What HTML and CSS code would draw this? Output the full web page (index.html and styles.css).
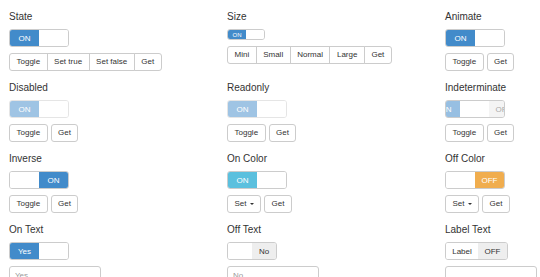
FILE: index.html
```html
<!DOCTYPE html>
<html lang="en">
<head>
  <meta charset="UTF-8">
  <title>Bootstrap Switch Options</title>
  <link rel="stylesheet" href="styles.css">
</head>
<body>
  <div class="grid">
    <div class="cell">
      <h4>State</h4>
      <div class="switch"><span class="on primary">ON</span><span class="label"></span></div>
      <div class="btn-group">
        <button class="btn">Toggle</button><button class="btn">Set true</button><button class="btn">Set false</button><button class="btn">Get</button>
      </div>
    </div>
    <div class="cell">
      <h4>Size</h4>
      <div class="switch mini"><span class="on primary">ON</span><span class="label"></span></div>
      <div class="btn-group">
        <button class="btn">Mini</button><button class="btn">Small</button><button class="btn">Normal</button><button class="btn">Large</button><button class="btn">Get</button>
      </div>
    </div>
    <div class="cell">
      <h4>Animate</h4>
      <div class="switch"><span class="on primary">ON</span><span class="label"></span></div>
      <div class="btns">
        <button class="btn">Toggle</button><button class="btn">Get</button>
      </div>
    </div>

    <div class="cell">
      <h4>Disabled</h4>
      <div class="switch faded"><span class="on primary">ON</span><span class="label"></span></div>
      <div class="btns">
        <button class="btn">Toggle</button><button class="btn">Get</button>
      </div>
    </div>
    <div class="cell">
      <h4>Readonly</h4>
      <div class="switch faded"><span class="on primary">ON</span><span class="label"></span></div>
      <div class="btns">
        <button class="btn">Toggle</button><button class="btn">Get</button>
      </div>
    </div>
    <div class="cell">
      <h4>Indeterminate</h4>
      <div class="switch fixed">
        <div class="track half"><span class="on primary faded-part">ON</span><span class="label"></span><span class="off">OFF</span></div>
      </div>
      <div class="btns">
        <button class="btn">Toggle</button><button class="btn">Get</button>
      </div>
    </div>

    <div class="cell">
      <h4>Inverse</h4>
      <div class="switch"><span class="label"></span><span class="on primary">ON</span></div>
      <div class="btns">
        <button class="btn">Toggle</button><button class="btn">Get</button>
      </div>
    </div>
    <div class="cell">
      <h4>On Color</h4>
      <div class="switch"><span class="on info">ON</span><span class="label"></span></div>
      <div class="btns">
        <button class="btn">Set <span class="caret"></span></button><button class="btn">Get</button>
      </div>
    </div>
    <div class="cell">
      <h4>Off Color</h4>
      <div class="switch"><span class="label"></span><span class="on warning">OFF</span></div>
      <div class="btns">
        <button class="btn">Set <span class="caret"></span></button><button class="btn">Get</button>
      </div>
    </div>

    <div class="cell">
      <h4>On Text</h4>
      <div class="switch"><span class="on primary">Yes</span><span class="label"></span></div>
      <input class="field" type="text" placeholder="Yes">
    </div>
    <div class="cell">
      <h4>Off Text</h4>
      <div class="switch narrow"><span class="label"></span><span class="off">No</span></div>
      <input class="field" type="text" placeholder="No">
    </div>
    <div class="cell">
      <h4>Label Text</h4>
      <div class="switch wide"><span class="label">Label</span><span class="off">OFF</span></div>
      <input class="field" type="text">
    </div>
  </div>
</body>
</html>
```

FILE: styles.css
```css
* {
  box-sizing: border-box;
}

body {
  margin: 0;
  padding: 11px 0 0 9px;
  background: #fff;
  color: #333;
  font-family: 'Liberation Sans', Arial, sans-serif;
  overflow: hidden;
}

.grid {
  display: grid;
  grid-template-columns: 218px 218px 1fr;
  row-gap: 11px;
}

.cell {
  display: flex;
  flex-direction: column;
  align-items: flex-start;
}

h4 {
  margin: 0 0 6px;
  font-size: 10px;
  line-height: 12px;
  font-weight: normal;
  color: #333;
}

.switch {
  display: flex;
  height: 18px;
  border: 1px solid #ccc;
  border-radius: 3px;
  overflow: hidden;
  font-size: 8px;
  background: #fff;
}

.switch span {
  width: 29px;
  flex: none;
  display: flex;
  align-items: center;
  justify-content: center;
}

.switch.fixed {
  width: 60px;
}

.track {
  display: flex;
  height: 100%;
  flex: none;
}

.track.half {
  margin-left: -15px;
}

.switch.mini {
  height: 11px;
  font-size: 6px;
}

.switch.mini span {
  width: 18px;
}

.switch.narrow span {
  width: 24px;
}

.switch.wide .label {
  width: 32px;
}

.switch.faded {
  opacity: 0.5;
}

.on {
  color: #fff;
}

.primary {
  background: #428bca;
}

.faded-part {
  opacity: 0.55;
}

.info {
  background: #5bc0de;
}

.warning {
  background: #f0ad4e;
}

.label {
  background: #fff;
  color: #333;
}

.off {
  background: #eee;
  color: #333;
}

.track .off {
  color: #aaa;
  background: #f4f4f4;
}

.btn-group,
.btns {
  display: flex;
  margin-top: 6px;
}

.btns {
  gap: 3px;
}

.btn {
  height: 18px;
  padding: 0 6.5px;
  border: 1px solid #ccc;
  border-radius: 3px;
  background: #fff;
  color: #333;
  font-family: 'Liberation Sans', Arial, sans-serif;
  font-size: 8px;
  line-height: 16px;
  display: flex;
  align-items: center;
  gap: 3px;
}

.btn-group .btn {
  border-radius: 0;
}

.btn-group .btn + .btn {
  margin-left: -1px;
}

.btn-group .btn:first-child {
  border-radius: 3px 0 0 3px;
}

.btn-group .btn:last-child {
  border-radius: 0 3px 3px 0;
}

.caret {
  width: 0;
  height: 0;
  border-left: 2px solid transparent;
  border-right: 2px solid transparent;
  border-top: 2px solid #333;
}

.field {
  margin-top: 6px;
  width: 92px;
  height: 18px;
  padding: 0 5px;
  border: 1px solid #ccc;
  border-radius: 3px;
  font-family: 'Liberation Sans', Arial, sans-serif;
  font-size: 8px;
  color: #555;
}

.field::placeholder {
  color: #999;
}
```
